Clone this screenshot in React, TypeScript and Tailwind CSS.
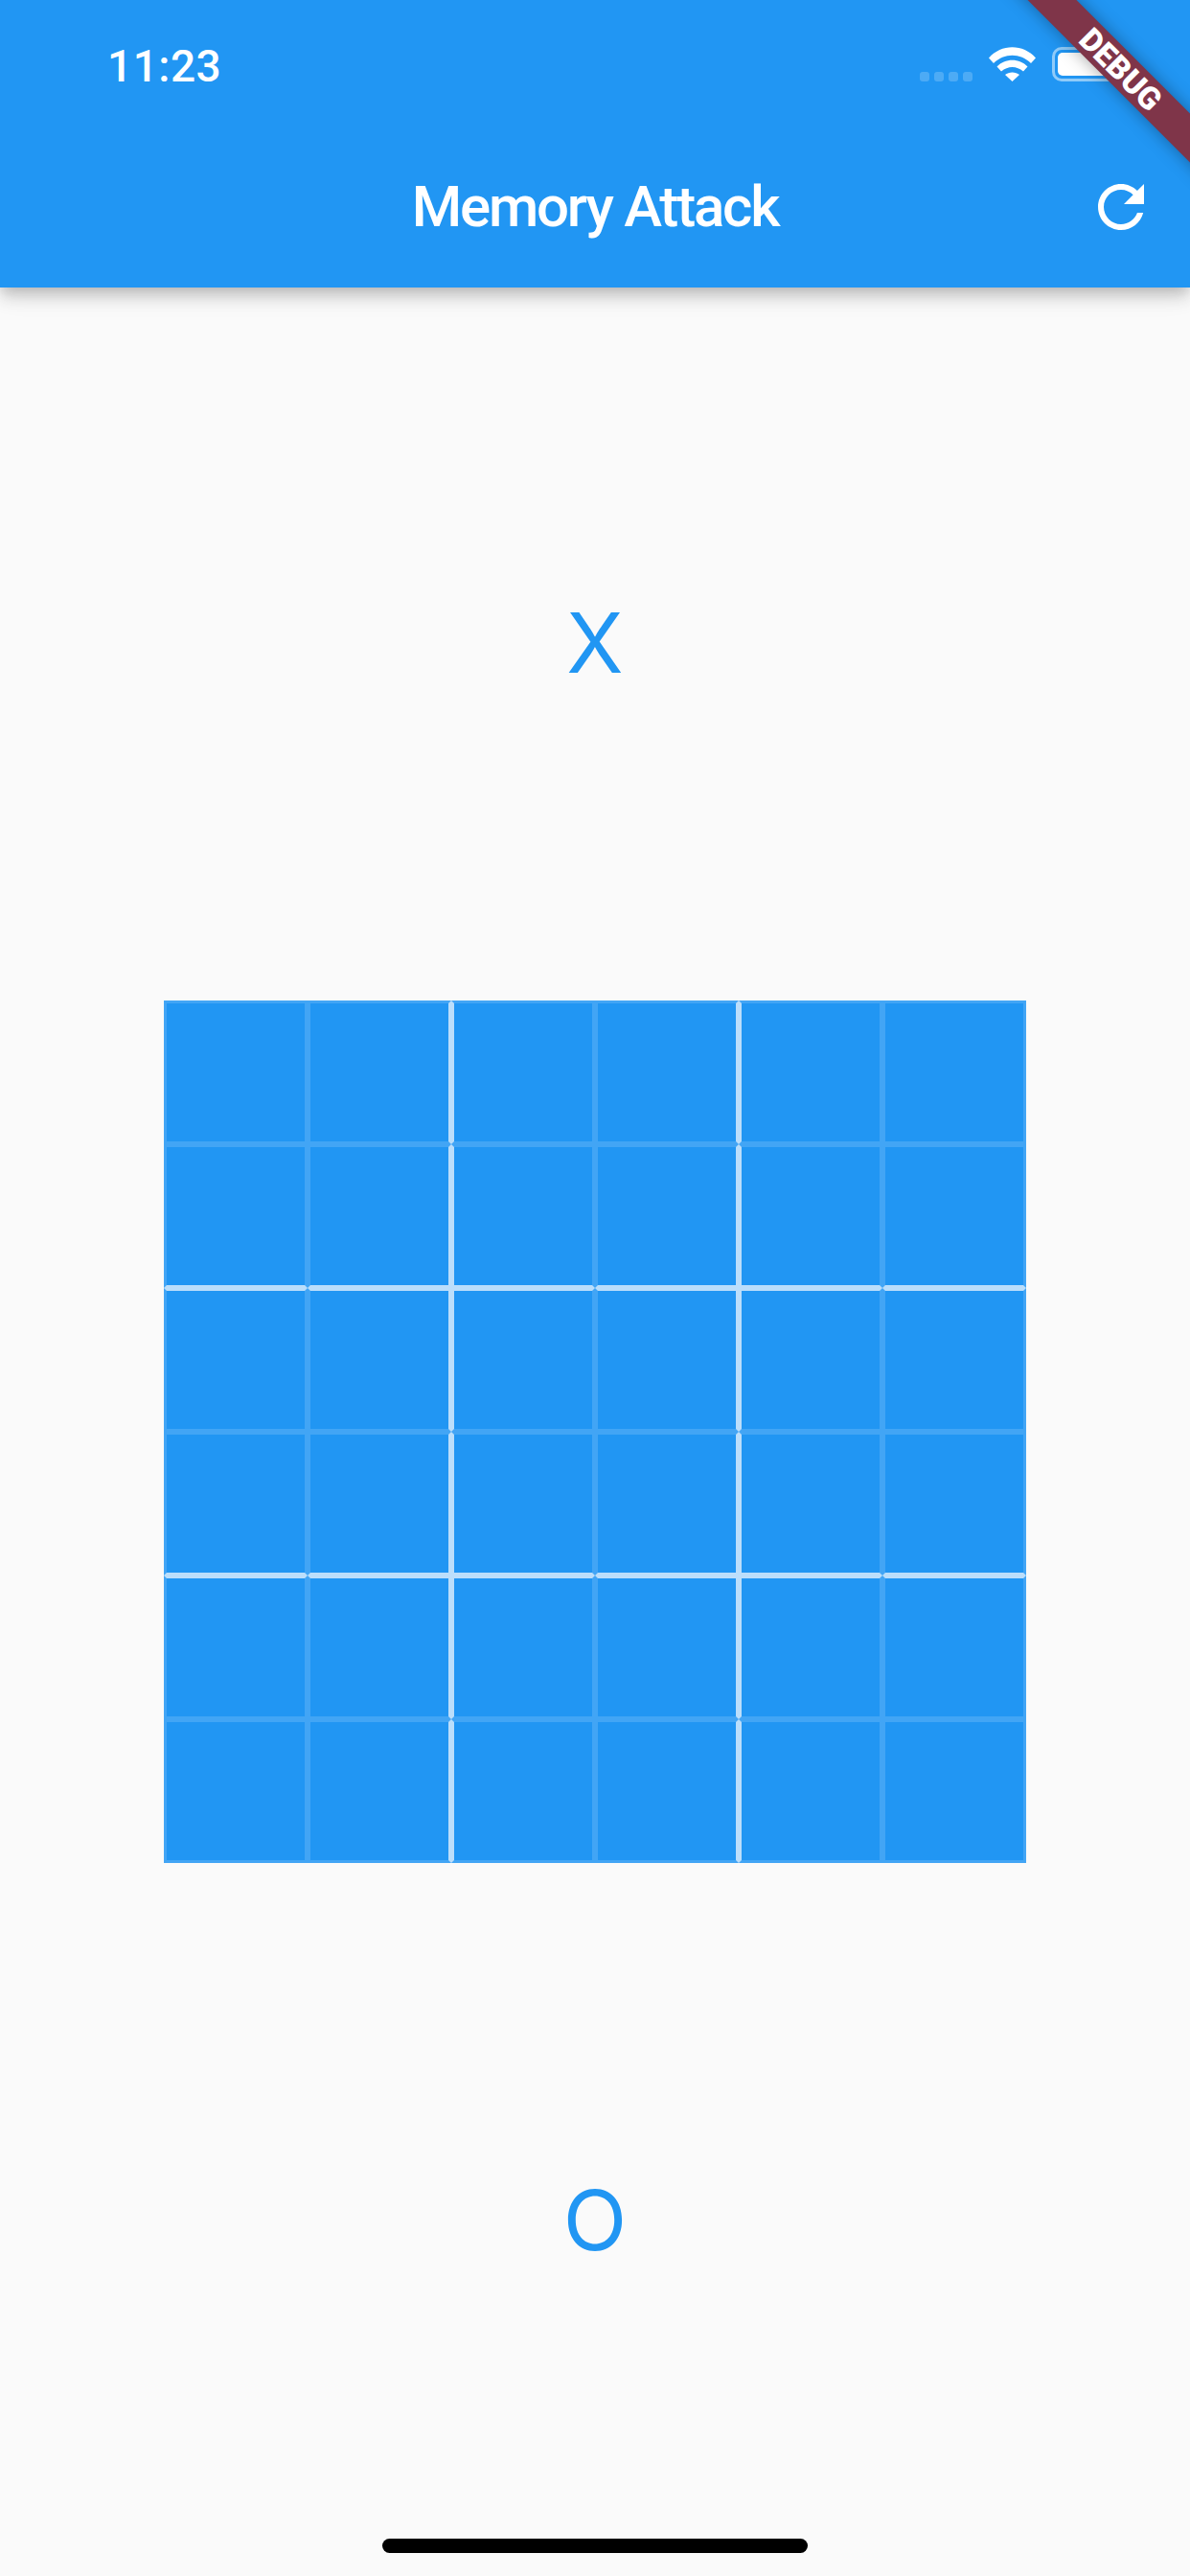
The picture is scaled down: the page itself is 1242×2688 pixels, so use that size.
const cells = Array.from({ length: 36 }, (_, i) => ({ row: Math.floor(i / 6), col: i % 6 }));

function Cell({ row, col }: { row: number; col: number }) {
  // every second grid line is the bright one
  return (
    <div
      className={`h-[150px] w-[150px] border-[3px] border-[#42a5f5] bg-[#2196f3] ${
        col === 1 || col === 3 ? 'border-r-[#bbdefb]' : ''
      } ${col === 2 || col === 4 ? 'border-l-[#bbdefb]' : ''} ${
        row === 1 || row === 3 ? 'border-b-[#bbdefb]' : ''
      } ${row === 2 || row === 4 ? 'border-t-[#bbdefb]' : ''}`}
    />
  );
}

function WifiIcon() {
  return (
    <svg width="49" height="36" viewBox="0 0 49 36" fill="white">
      <path d="M0 11.5C13-3.5 36-3.5 49 11.5L44 17C33 6 16 6 5 17Z" />
      <path d="M8.5 20.5C17 11.5 32 11.5 40.5 20.5L36 25.5C29 19.5 20 19.5 13 25.5Z" />
      <path d="M17 29C21 25.5 28 25.5 32 29L24.5 36Z" />
    </svg>
  );
}

function RefreshIcon() {
  return (
    <svg width="72" height="72" viewBox="0 0 24 24" fill="white">
      <path d="M17.65 6.35C16.2 4.9 14.21 4 12 4c-4.42 0-7.99 3.58-7.99 8s3.57 8 7.99 8c3.73 0 6.84-2.55 7.73-6h-2.08c-.82 2.33-3.04 4-5.65 4-3.31 0-6-2.69-6-6s2.69-6 6-6c1.66 0 3.14.69 4.22 1.78L13 11h7V4l-2.35 2.35z" />
    </svg>
  );
}

export default function App() {
  return (
    <div className="relative flex h-[2688px] w-[1242px] flex-col overflow-hidden bg-[#fafafa] font-['Roboto',sans-serif]">
      <header className="relative z-10 h-[300px] bg-[#2196f3] text-white shadow-[0_6px_12px_-3px_rgba(0,0,0,0.14),0_12px_15px_0_rgba(0,0,0,0.1),0_3px_30px_0_rgba(0,0,0,0.1)]">
        <div className="flex h-[132px] items-start justify-between pt-[49px] pl-[112px] pr-[74px]">
          <span className="mt-[2px] text-[46px] leading-[36px] font-medium tracking-[0.5px]">11:23</span>
          <div className="flex items-end">
            <div className="mr-[17px] flex gap-[5px]">
              <span className="h-[10px] w-[10px] rounded-[3px] bg-white/20" />
              <span className="h-[10px] w-[10px] rounded-[3px] bg-white/20" />
              <span className="h-[10px] w-[10px] rounded-[3px] bg-white/20" />
              <span className="h-[10px] w-[10px] rounded-[3px] bg-white/20" />
            </div>
            <WifiIcon />
            <div className="ml-[17px] h-[36px] w-[70px] rounded-[10px] border-[3px] border-white/50 p-[3px]">
              <div className="h-full w-full rounded-[5px] bg-white" />
            </div>
          </div>
        </div>
        <div className="relative flex h-[168px] items-center justify-center">
          <h1 className="text-[60px] leading-none font-medium tracking-[-2.2px]">Memory Attack</h1>
          <button className="absolute top-[48px] right-[36px]">
            <RefreshIcon />
          </button>
        </div>
      </header>

      <main className="flex flex-1 flex-col items-center">
        <div className="flex flex-1 items-center justify-center font-['Inter',sans-serif] text-[87px] leading-none text-[#2196f3]">
          <span className="-mt-[4px]">X</span>
        </div>
        <div className="grid w-[900px] grid-cols-6">
          {cells.map((c) => (
            <Cell key={`${c.row}-${c.col}`} row={c.row} col={c.col} />
          ))}
        </div>
        <div className="flex flex-1 items-center justify-center font-['Inter',sans-serif] text-[87px] leading-none text-[#2196f3]">O</div>
      </main>

      <div className="absolute bottom-[24px] left-[399px] h-[15px] w-[444px] rounded-full bg-black" />

      <div className="absolute top-[54px] left-[970px] z-20 flex h-[36px] w-[400px] rotate-45 items-center justify-center bg-[#7f3549] text-[33px] leading-none font-black text-white shadow-[0_0_18px_rgba(0,0,0,0.35)]">
        DEBUG
      </div>
    </div>
  );
}
